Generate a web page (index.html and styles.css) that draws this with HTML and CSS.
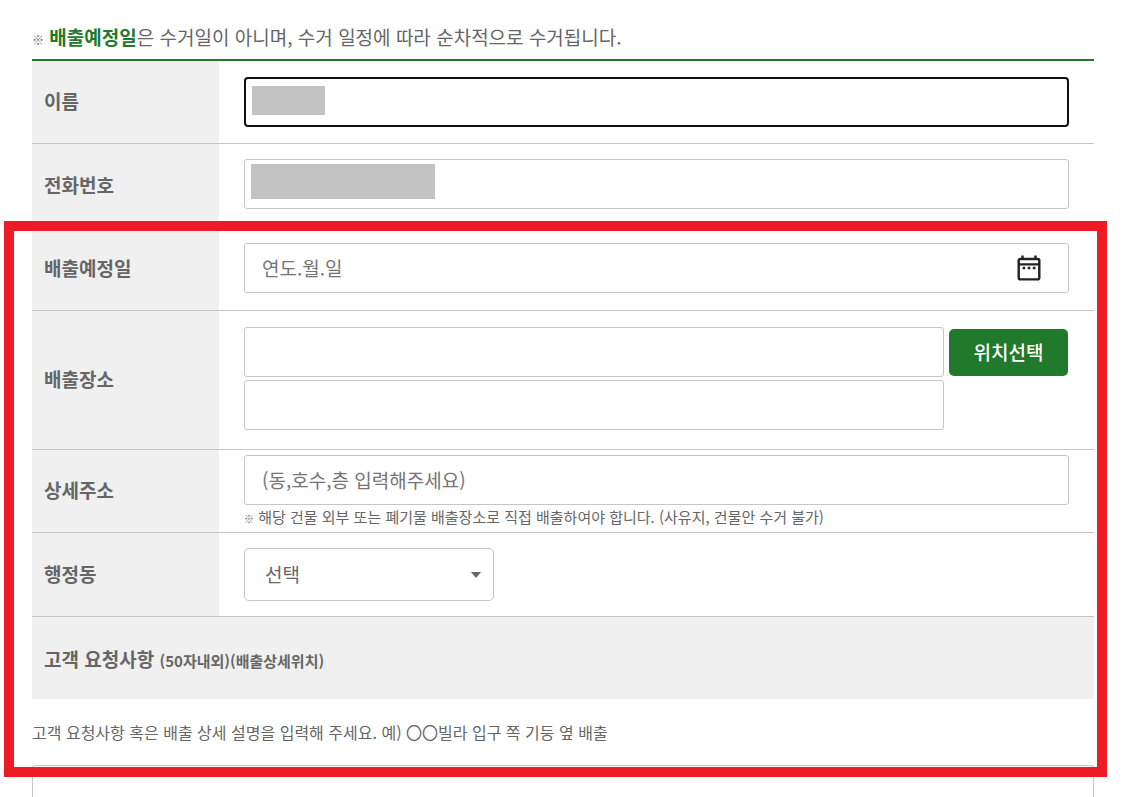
FILE: index.html
```html
<!DOCTYPE html>
<html lang="ko">
<head>
<meta charset="utf-8">
<meta name="viewport" content="width=device-width, initial-scale=1">
<title>배출 신청</title>
<link rel="stylesheet" href="styles.css">
</head>
<body>
<form class="page">
  <p class="notice"><span class="mark">※</span> <strong>배출예정일</strong>은 수거일이 아니며, 수거 일정에 따라 순차적으로 수거됩니다.</p>
  <div class="rows">
    <div class="row">
      <label class="name" for="user">이름</label>
      <div class="cell cell-first">
        <div class="field"><input class="input input-active" id="user" type="text"><span class="mask mask-user"></span></div>
      </div>
    </div>
    <div class="row">
      <label class="name" for="phone">전화번호</label>
      <div class="cell cell-phone">
        <div class="field"><input class="input" id="phone" type="tel"><span class="mask mask-phone"></span></div>
      </div>
    </div>
    <div class="row">
      <label class="name" for="date">배출예정일</label>
      <div class="cell">
        <div class="field">
          <input class="input" id="date" type="text" placeholder="연도.월.일">
          <button class="calendar" type="button" aria-label="달력">
            <svg width="24" height="26" viewBox="0 0 24 26" fill="none" stroke="#222" stroke-width="2.4">
              <rect x="1.7" y="4" width="20.6" height="20.4" rx="1.6"/>
              <path d="M1.7 9.4h20.6M5.5 0.5v4M18.5 0.5v4"/>
              <path d="M5.6 13h2.6M10.7 13h2.6M15.8 13h2.6"/>
            </svg>
          </button>
        </div>
      </div>
    </div>
    <div class="row">
      <label class="name" for="place">배출장소</label>
      <div class="cell cell-place">
        <div class="place">
          <input class="input" id="place" type="text">
          <input class="input" type="text" aria-label="배출장소 상세">
        </div>
        <button class="pick" type="button">위치선택</button>
      </div>
    </div>
    <div class="row">
      <label class="name" for="detail">상세주소</label>
      <div class="cell cell-detail">
        <input class="input" id="detail" type="text" placeholder="(동,호수,층 입력해주세요)">
        <p class="hint"><span class="mark mark-small">※</span> 해당 건물 외부 또는 폐기물 배출장소로 직접 배출하여야 합니다. (사유지, 건물안 수거 불가)</p>
      </div>
    </div>
    <div class="row">
      <label class="name" for="dong">행정동</label>
      <div class="cell cell-select">
        <div class="select-box">
          <select class="select" id="dong"><option>선택</option></select>
          <svg class="arrow" width="10" height="6" viewBox="0 0 10 6"><path d="M0 0h10L5 6z" fill="#666"/></svg>
        </div>
      </div>
    </div>
  </div>
  <label class="request" for="request">고객 요청사항 <small>(50자내외)(배출상세위치)</small></label>
  <p class="guide">고객 요청사항 혹은 배출 상세 설명을 입력해 주세요. 예) 〇〇빌라 입구 쪽 기둥 옆 배출</p>
  <textarea class="textarea" id="request"></textarea>
  <div class="highlight"></div>
</form>
</body>
</html>
```
FILE: styles.css
```css
* { box-sizing: border-box; }
body {
  margin: 0;
  background: #fff;
  color: #666;
  font-family: "Noto Sans CJK KR", sans-serif;
  font-size: 19px;
  line-height: 28px;
}
p { margin: 0; }
input, select, textarea, button { font: inherit; color: inherit; }
.page {
  position: relative;
  display: flex;
  flex-direction: column;
  min-height: 100vh;
  padding: 23px 39px 0 32px;
}
.notice { padding-bottom: 8px; border-bottom: 2px solid #217a2b; }
.notice strong { color: #217a2b; }
.mark { font-size: 12px; font-weight: 700; line-height: 1; }
.mark-small { font-size: 10px; }
.row {
  display: grid;
  grid-template-columns: 187px 1fr;
  border-bottom: 1px solid #c6c6c6;
}
.name {
  display: flex;
  align-items: center;
  padding: 0 0 2px 12px;
  background: #f0f0f0;
  font-weight: 700;
}
.cell { padding: 15px 25px 17px; }
.cell-first { padding: 16px 25px; }
.cell-phone { padding-bottom: 18px; }
.cell-place {
  display: flex;
  align-items: flex-start;
  gap: 5px;
  padding: 16px 26px 19px 25px;
}
.cell-detail { padding: 5px 25px 4px; }
.cell-select { padding-bottom: 15px; }
.field { position: relative; }
.input {
  display: block;
  width: 100%;
  height: 50px;
  padding: 0 17px 2px;
  border: 1px solid #c6c6c6;
  border-radius: 3px;
  background: #fff;
}
.input::placeholder { color: #757575; opacity: 1; }
.input-active { border: 2px solid #111; border-radius: 4px; }
.mask { position: absolute; background: #c3c3c3; }
.mask-user { left: 8px; top: 9px; width: 73px; height: 29px; }
.mask-phone { left: 7px; top: 5px; width: 184px; height: 35px; }
.calendar {
  position: absolute;
  right: 28px;
  top: 12px;
  width: 24px;
  height: 26px;
  padding: 0;
  border: 0;
  background: none;
}
.calendar svg { display: block; }
.place { flex: 1; display: grid; gap: 3px; }
.pick {
  width: 119px;
  height: 47px;
  margin-top: 2px;
  padding: 0 0 2px;
  border: 0;
  border-radius: 5px;
  background: #217a2b;
  color: #fff;
  font-weight: 500;
}
.hint { font-size: 15px; line-height: 23px; }
.select-box { position: relative; width: 250px; }
.select {
  display: block;
  width: 100%;
  height: 53px;
  padding: 0 20px 2px;
  border: 1px solid #c6c6c6;
  border-radius: 5px;
  background: #fff;
  appearance: none;
}
.arrow { position: absolute; right: 13px; top: 24px; }
.request {
  padding: 27px 12px 25px;
  line-height: 30px;
  background: #f0f0f0;
  font-weight: 700;
}
.request small { font-size: 15px; line-height: 1; }
.guide { padding: 19px 0; font-size: 16px; }
.textarea {
  flex: 1;
  display: block;
  width: 100%;
  min-height: 32px;
  padding: 0 17px;
  border: 1px solid #c6c6c6;
  border-bottom: 0;
  border-radius: 3px 3px 0 0;
  background: #fff;
  resize: none;
}
.highlight {
  position: absolute;
  left: 4px;
  right: 26px;
  top: 221px;
  height: 556px;
  border: 10px solid #ed1c24;
  pointer-events: none;
}
```
